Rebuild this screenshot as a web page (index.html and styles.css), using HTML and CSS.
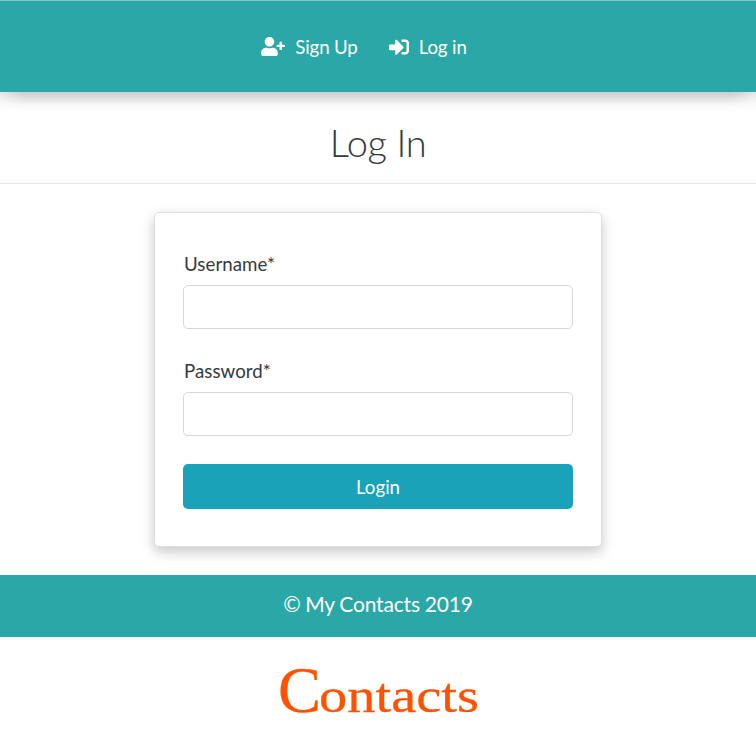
FILE: index.html
```html
<!DOCTYPE html>
<html lang="en">
<head>
<meta charset="utf-8">
<title>Log In</title>
<link rel="stylesheet" href="styles.css">
</head>
<body>
<nav class="navbar">
  <a class="nav-link"><svg class="icon-user" viewBox="0 0 640 512"><path d="M624 208h-64v-64c0-8.800-7.200-16-16-16h-32c-8.800 0-16 7.200-16 16v64h-64c-8.800 0-16 7.200-16 16v32c0 8.800 7.200 16 16 16h64v64c0 8.800 7.200 16 16 16h32c8.800 0 16-7.200 16-16v-64h64c8.800 0 16-7.200 16-16v-32c0-8.800-7.200-16-16-16zm-400 48c70.700 0 128-57.300 128-128S294.700 0 224 0 96 57.300 96 128s57.300 128 128 128zm89.600 32h-16.700c-22.200 10.200-46.900 16-72.900 16s-50.600-5.800-72.900-16h-16.700C60.200 288 0 348.200 0 422.400V464c0 26.500 21.500 48 48 48h352c26.500 0 48-21.500 48-48v-41.600c0-74.200-60.200-134.400-134.400-134.400z"/></svg><span>Sign Up</span></a>
  <a class="nav-link"><svg class="icon-login" viewBox="0 0 512 512"><path d="M416 448h-84c-6.600 0-12-5.400-12-12v-40c0-6.600 5.400-12 12-12h84c17.700 0 32-14.300 32-32V160c0-17.700-14.300-32-32-32h-84c-6.600 0-12-5.400-12-12V76c0-6.600 5.400-12 12-12h84c53 0 96 43 96 96v192c0 53-43 96-96 96zm-47-201L201 79c-15-15-41-4.500-41 17v96H24c-13.300 0-24 10.700-24 24v96c0 13.300 10.700 24 24 24h136v96c0 21.500 26 32 41 17l168-168c9.300-9.400 9.300-24.600 0-34z"/></svg><span>Log in</span></a>
</nav>
<h1 class="title">Log In</h1>
<main class="content">
  <form class="card">
    <label class="label" for="username">Username*</label>
    <input class="input" id="username" type="text">
    <label class="label" for="password">Password*</label>
    <input class="input" id="password" type="password">
    <button class="button" type="button">Login</button>
  </form>
</main>
<footer class="footer">© My Contacts 2019</footer>
<div class="brand">
  <svg width="224" height="90" viewBox="-10 -10 224 90">
    <text class="brand-cap" x="2" y="52" textLength="43" lengthAdjust="spacingAndGlyphs">C</text>
    <text class="brand-rest" x="43" y="52" textLength="160" lengthAdjust="spacingAndGlyphs">ontacts</text>
  </svg>
</div>
</body>
</html>
```
FILE: styles.css
```css
* { box-sizing: border-box; }
body {
  margin: 0;
  background: #fff;
  color: #343a40;
  font: 18.7px/28px Lato, sans-serif;
}
.navbar {
  position: relative;
  display: flex;
  justify-content: center;
  align-items: center;
  gap: 31px;
  height: 92px;
  padding: 0 28px 0 0;
  border-top: 1px solid #84c3c3;
  background: #2aa7a7;
  color: #fff;
  box-shadow: -12px 5px 14px rgba(0, 0, 0, .14), 12px 5px 14px rgba(0, 0, 0, .14);
}
.nav-link { display: flex; align-items: center; gap: 10px; letter-spacing: -.15px; }
.nav-link svg { fill: #fff; }
.icon-user { width: 24px; height: 19px; }
.icon-login { width: 20px; height: 20px; }
.title {
  height: 92px;
  margin: 0;
  padding-top: 27px;
  border-bottom: 1px solid #e5e6e7;
  color: #343a40;
  font-size: 38px;
  font-weight: 300;
  letter-spacing: -.4px;
  line-height: 46px;
  text-align: center;
}
.content { padding: 28px 154px; }
.card {
  display: flex;
  flex-direction: column;
  height: 335px;
  padding: 37px 28px 0;
  border: 1px solid #dcdfdf;
  border-radius: 5px;
  background: #fff;
  box-shadow: 0 5px 13px rgba(0, 0, 0, .22);
}
.label { margin-bottom: 7px; padding-left: 1px; letter-spacing: .05px; }
.input {
  width: 100%;
  height: 44px;
  margin: 0 0 28px;
  border: 1px solid #d5d9dc;
  border-radius: 5px;
  background: #fff;
  font: inherit;
}
.button {
  height: 45px;
  padding: 0;
  border: 0;
  border-radius: 5px;
  background: #19a2b8;
  color: #fff;
  font: inherit;
}
.footer {
  height: 62px;
  padding-top: 15px;
  background: #2aa7a7;
  color: #fff;
  font-size: 21px;
  letter-spacing: -.15px;
  word-spacing: -.5px;
  text-align: center;
}
.brand { display: flex; justify-content: center; padding-top: 13px; }
.brand text { fill: #ff5200; stroke: #ff5200; stroke-width: .3; font-family: "Liberation Serif", serif; }
.brand-cap { font-size: 65px; }
.brand-rest { font-size: 48px; }
```
